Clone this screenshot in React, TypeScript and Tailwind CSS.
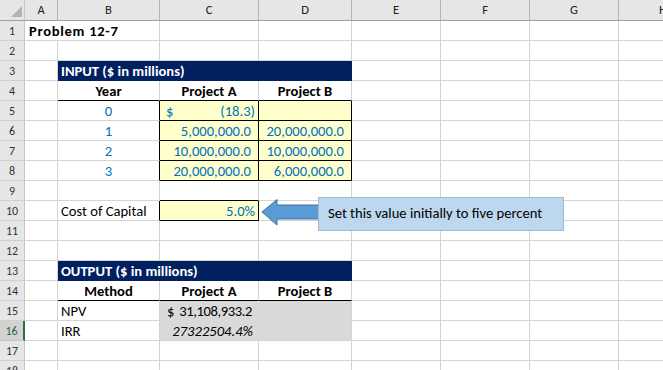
import React from "react";

type CellProps = {
  w: string;
  r?: string;
  b?: string;
  bg?: string;
  className?: string;
  children?: React.ReactNode;
};

function Cell({ w, r = "border-r-[#d4d4d4]", b = "border-b-[#d4d4d4]", bg = "", className = "", children }: CellProps) {
  return (
    <div className={`h-full shrink-0 border-r border-b ${r} ${b} ${bg} ${w} flex items-end pb-[1px] leading-none whitespace-nowrap overflow-visible ${className}`}>
      {children}
    </div>
  );
}

const A = "w-[33px]";
const B = "w-[102px]";
const C = "w-[99px]";
const D = "w-[93px]";
const E = "w-[89px]";

function RowHead({ n, sel = false }: { n: number; sel?: boolean }) {
  return (
    <div
      className={`h-full w-[25px] shrink-0 flex items-center justify-center border-b border-r text-[12px] leading-none ${
        sel
          ? "bg-[#d2d2d2] text-[#1e6b3f] border-r-2 border-r-[#217346] border-b-[#c6c6c6]"
          : "bg-[#e6e6e6] text-[#333333] border-r-[#c6c6c6] border-b-[#d0d0d0]"
      }`}
    >
      {n}
    </div>
  );
}

function Rest() {
  return (
    <>
      <Cell w={E} />
      <Cell w={E} />
      <Cell w={E} />
      <Cell w={E} />
    </>
  );
}

function Row({ children }: { children: React.ReactNode }) {
  return <div className="flex h-[20px]">{children}</div>;
}

const blue = "text-[#0070c0]";
const yellow = "bg-[#ffffcc]";
const gray = "bg-[#d9d9d9]";

export default function App() {
  const cols = ["A", "B", "C", "D", "E", "F", "G", "H"];
  const widths = [A, B, C, D, E, E, E, E];
  return (
    <div
      className="relative w-[663px] h-[370px] overflow-hidden bg-white text-[14.6px] text-black"
      style={{ fontFamily: "Carlito, Calibri, Lato, 'Open Sans', sans-serif" }}
    >
      {/* column header */}
      <div className="flex h-[21px]">
        <div className="relative w-[25px] h-full shrink-0 bg-[#e6e6e6] border-r border-b border-r-[#c6c6c6] border-b-[#9f9f9f]">
          <svg className="absolute left-[11px] top-[6px]" width="11" height="11" viewBox="0 0 11 11">
            <polygon points="11,0 11,11 0,11" fill="#b4b4b4" />
          </svg>
        </div>
        {cols.map((c, i) => (
          <div
            key={c}
            className={`h-full shrink-0 ${widths[i]} bg-[#e6e6e6] border-r border-b border-r-[#b4b4b4] border-b-[#9f9f9f] flex items-center justify-center text-[12.5px] leading-none text-[#222222]`}
          >
            {c}
          </div>
        ))}
      </div>

      {/* Row 1 */}
      <Row>
        <RowHead n={1} />
        <Cell w="w-[135px]" className="pl-[4px] font-bold tracking-[0.7px]">Problem 12-7</Cell>
        <Cell w={C} />
        <Cell w={D} />
        <Rest />
      </Row>
      {/* Row 2 */}
      <Row>
        <RowHead n={2} />
        <Cell w={A} />
        <Cell w={B} />
        <Cell w={C} />
        <Cell w={D} />
        <Rest />
      </Row>
      {/* Row 3 */}
      <Row>
        <RowHead n={3} />
        <Cell w={A} />
        <Cell w="w-[294px]" bg="bg-[#002060]" r="border-r-[#002060]" b="border-b-[#002060]" className="pl-[3px] text-white font-bold">
          INPUT ($ in millions)
        </Cell>
        <Rest />
      </Row>
      {/* Row 4 */}
      <Row>
        <RowHead n={4} />
        <Cell w={A} />
        <Cell w={B} b="border-b-black" className="justify-center font-bold">Year</Cell>
        <Cell w={C} b="border-b-black" className="justify-center font-bold">Project A</Cell>
        <Cell w={D} b="border-b-black" className="justify-center font-bold">Project B</Cell>
        <Rest />
      </Row>
      {/* Row 5 */}
      <Row>
        <RowHead n={5} />
        <Cell w={A} />
        <Cell w={B} r="border-r-black" className={`justify-center ${blue}`}>0</Cell>
        <Cell w={C} r="border-r-black" b="border-b-black" bg={yellow} className={`justify-between pl-[6px] pr-[3px] ${blue}`}>
          <span>$</span>
          <span>(18.3)</span>
        </Cell>
        <Cell w={D} r="border-r-black" b="border-b-black" bg={yellow} />
        <Rest />
      </Row>
      {[
        ["1", "5,000,000.0", "20,000,000.0"],
        ["2", "10,000,000.0", "10,000,000.0"],
        ["3", "20,000,000.0", "6,000,000.0"],
      ].map((r, i) => (
        <Row key={i}>
          <RowHead n={6 + i} />
          <Cell w={A} />
          <Cell w={B} r="border-r-black" className={`justify-center ${blue}`}>{r[0]}</Cell>
          <Cell w={C} r="border-r-black" b="border-b-black" bg={yellow} className={`justify-end pr-[7px] ${blue}`}>{r[1]}</Cell>
          <Cell w={D} r="border-r-black" b="border-b-black" bg={yellow} className={`justify-end pr-[7px] ${blue}`}>{r[2]}</Cell>
          <Rest />
        </Row>
      ))}
      {/* Row 9 */}
      <Row>
        <RowHead n={9} />
        <Cell w={A} />
        <Cell w={B} />
        <Cell w={C} b="border-b-black" />
        <Cell w={D} />
        <Rest />
      </Row>
      {/* Row 10 */}
      <Row>
        <RowHead n={10} />
        <Cell w={A} />
        <Cell w={B} r="border-r-black" className="pl-[3px]">Cost of Capital</Cell>
        <Cell w={C} r="border-r-black" b="border-b-black" bg={yellow} className={`justify-end pr-[3px] ${blue}`}>5.0%</Cell>
        <Cell w={D} />
        <Rest />
      </Row>
      {/* Row 11, 12 */}
      {[11, 12].map((n) => (
        <Row key={n}>
          <RowHead n={n} />
          <Cell w={A} />
          <Cell w={B} />
          <Cell w={C} />
          <Cell w={D} />
          <Rest />
        </Row>
      ))}
      {/* Row 13 */}
      <Row>
        <RowHead n={13} />
        <Cell w={A} />
        <Cell w="w-[294px]" bg="bg-[#002060]" r="border-r-[#002060]" b="border-b-[#002060]" className="pl-[3px] text-white font-bold">
          OUTPUT ($ in millions)
        </Cell>
        <Rest />
      </Row>
      {/* Row 14 */}
      <Row>
        <RowHead n={14} />
        <Cell w={A} />
        <Cell w={B} b="border-b-black" className="justify-center font-bold">Method</Cell>
        <Cell w={C} b="border-b-black" className="justify-center font-bold">Project A</Cell>
        <Cell w={D} b="border-b-black" className="justify-center font-bold">Project B</Cell>
        <Rest />
      </Row>
      {/* Row 15 */}
      <Row>
        <RowHead n={15} />
        <Cell w={A} />
        <Cell w={B} className="pl-[3px]">NPV</Cell>
        <Cell w={C} bg={gray} r="border-r-[#d9d9d9]" b="border-b-[#d9d9d9]" className="justify-between pl-[7px] pr-[6px]">
          <span>$</span>
          <span className="tracking-[-0.4px]">31,108,933.2</span>
        </Cell>
        <Cell w={D} bg={gray} b="border-b-[#d9d9d9]" />
        <Rest />
      </Row>
      {/* Row 16 */}
      <Row>
        <RowHead n={16} sel />
        <Cell w={A} />
        <Cell w={B} className="pl-[3px]">IRR</Cell>
        <Cell w={C} bg={gray} r="border-r-[#d9d9d9]" className="justify-end pr-[5px] italic">
          27322504.4%
        </Cell>
        <Cell w={D} bg={gray} />
        <Rest />
      </Row>
      {[17, 18].map((n) => (
        <Row key={n}>
          <RowHead n={n} />
          <Cell w={A} />
          <Cell w={B} />
          <Cell w={C} />
          <Cell w={D} />
          <Rest />
        </Row>
      ))}

      {/* Arrow */}
      <svg className="absolute left-[260px] top-[197px]" width="62" height="30" viewBox="0 0 62 30">
        <polygon
          points="2,15 17,2.5 17,8 60,8 60,22 17,22 17,28 "
          fill="#5b9bd5"
          stroke="#41719c"
          strokeWidth="1"
        />
      </svg>
      {/* Callout */}
      <div className="absolute left-[318px] top-[197px] w-[246px] h-[34px] bg-[#bdd7ee] border border-[#a3b9cf] flex items-center pl-[9px] pb-[1px] leading-none text-black">
        Set this value initially to five percent
      </div>
    </div>
  );
}
